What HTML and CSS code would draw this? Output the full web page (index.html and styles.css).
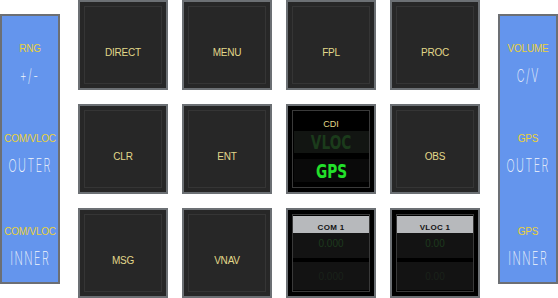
FILE: index.html
```html
<!DOCTYPE html>
<html>
<head>
<meta charset="utf-8">
<link rel="stylesheet" href="styles.css">
</head>
<body>
<div class="panel">
  <div class="knob k1"><span class="klabel">RNG</span><span class="kval">+/-</span></div>
  <div class="knob k2"><span class="klabel">COM/VLOC</span><span class="kval">OUTER</span></div>
  <div class="knob k3"><span class="klabel">COM/VLOC</span><span class="kval">INNER</span></div>
</div>
<div class="grid">
  <div class="btn"><div class="frame"><span class="lbl">DIRECT</span></div></div>
  <div class="btn"><div class="frame"><span class="lbl">MENU</span></div></div>
  <div class="btn"><div class="frame"><span class="lbl">FPL</span></div></div>
  <div class="btn"><div class="frame"><span class="lbl">PROC</span></div></div>
  <div class="btn"><div class="frame"><span class="lbl">CLR</span></div></div>
  <div class="btn"><div class="frame"><span class="lbl">ENT</span></div></div>
  <div class="btn black"><div class="frame cdi">
    <span class="cdi-title">CDI</span>
    <div class="band vloc"><span class="big">VLOC</span></div>
    <div class="band gps"><span class="big">GPS</span></div>
  </div></div>
  <div class="btn"><div class="frame"><span class="lbl">OBS</span></div></div>
  <div class="btn"><div class="frame"><span class="lbl">MSG</span></div></div>
  <div class="btn"><div class="frame"><span class="lbl">VNAV</span></div></div>
  <div class="btn black"><div class="frame freq">
    <div class="fhead">COM 1</div>
    <div class="fband active">0.000</div>
    <div class="fband stby">0.000</div>
  </div></div>
  <div class="btn black"><div class="frame freq">
    <div class="fhead">VLOC 1</div>
    <div class="fband active">0.00</div>
    <div class="fband stby">0.00</div>
  </div></div>
</div>
<div class="panel">
  <div class="knob k1"><span class="klabel">VOLUME</span><span class="kval">C/V</span></div>
  <div class="knob k2"><span class="klabel">GPS</span><span class="kval">OUTER</span></div>
  <div class="knob k3"><span class="klabel">GPS</span><span class="kval">INNER</span></div>
</div>
</body>
</html>
```
FILE: styles.css
```css
html, body {
  margin: 0;
  padding: 0;
  background: #ffffff;
}
body {
  width: 558px;
  height: 298px;
  display: flex;
  align-items: center;
  justify-content: space-between;
  font-family: "Liberation Sans", Arial, sans-serif;
  overflow: hidden;
}
.panel {
  box-sizing: border-box;
  width: 60px;
  height: 270px;
  background: #6495ed;
  border: 2px solid #6c6f74;
  display: flex;
  flex-direction: column;
}
.knob {
  height: 88.67px;
  box-sizing: border-box;
  display: flex;
  flex-direction: column;
  align-items: center;
}
.k1 { padding-top: 27px; }
.k2 { padding-top: 28px; }
.k3 { padding-top: 33px; }
.klabel {
  font-size: 10px;
  line-height: 12px;
  color: #e9d13a;
  letter-spacing: -0.2px;
}
.kval {
  margin-top: 13px;
  font-family: "Inter", "DejaVu Sans Mono", sans-serif;
  font-weight: 200;
  font-size: 18px;
  line-height: 16px;
  color: #f2f5fb;
  letter-spacing: 2.5px;
  display: inline-block;
  white-space: nowrap;
  transform: scaleX(0.6);
}
.grid {
  display: grid;
  grid-template-columns: repeat(4, 90px);
  grid-template-rows: repeat(3, 90px);
  gap: 14px;
}
.btn {
  box-sizing: border-box;
  width: 90px;
  height: 90px;
  border: 2px solid #6c7074;
  background: #272727;
  padding: 4px;
}
.btn.black {
  background: #000;
}
.frame {
  box-sizing: border-box;
  height: 78px;
  border: 1px solid #353535;
  display: flex;
  align-items: center;
  justify-content: center;
  padding-top: 15px;
}
.btn.black .frame {
  border-color: #3a3a3a;
}
.lbl {
  font-size: 10px;
  line-height: 12px;
  color: #e2d88a;
  letter-spacing: -0.2px;
}
.frame.cdi,
.frame.freq {
  display: block;
  padding: 0;
}
.cdi-title {
  display: block;
  height: 20px;
  padding-top: 8px;
  box-sizing: border-box;
  text-align: center;
  font-size: 9px;
  line-height: 10px;
  color: #e2d88a;
}
.band {
  margin-left: 1px;
  background: #121512;
  display: flex;
  align-items: center;
  justify-content: center;
}
.band.vloc {
  height: 22px;
}
.band.gps {
  height: 23px;
  margin-top: 6px;
  background: #0a0a0a;
}
.big {
  display: inline-block;
  font-family: "DejaVu Sans", sans-serif;
  font-weight: bold;
  font-size: 19px;
  line-height: 22px;
  transform: scaleX(0.72);
}
.vloc .big { color: #1b3b1b; }
.gps .big { color: #22e02a; }
.fhead {
  margin-top: 1px;
  height: 17px;
  box-sizing: border-box;
  background: #b7b9bc;
  color: #141414;
  font-weight: bold;
  font-size: 8px;
  line-height: 8px;
  padding-top: 8px;
  text-align: center;
  letter-spacing: 0.3px;
}
.fband {
  background: #131313;
  text-align: center;
  font-size: 10px;
}
.fband.active {
  height: 25px;
  line-height: 22px;
  color: #1d3a1d;
}
.fband.stby {
  margin-top: 4px;
  height: 28px;
  line-height: 30px;
  color: #1a221a;
}
```
